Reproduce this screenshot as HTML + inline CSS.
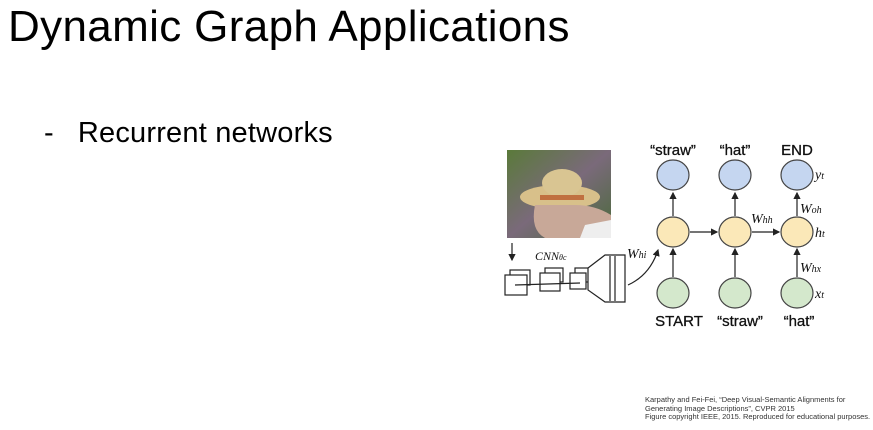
<!DOCTYPE html>
<html><head><style>
body{margin:0;width:873px;height:430px;background:#fff;font-family:"Liberation Sans",sans-serif;overflow:hidden;position:relative}
.t{position:absolute;left:8px;top:2px;font-size:44px;color:#000;white-space:nowrap;letter-spacing:0.35px}
.b{position:absolute;left:44px;top:117px;font-size:29px;color:#000;white-space:nowrap}
.b span{letter-spacing:0.2px}
.c{position:absolute;left:645px;top:396px;font-size:7.5px;line-height:8.5px;color:#333;white-space:nowrap}
</style></head><body>
<div class="t">Dynamic Graph Applications</div>
<div class="b">-&nbsp;&nbsp;&nbsp;<span>Recurrent networks</span></div>
<svg width="873" height="430" style="position:absolute;left:0;top:0">
<defs><marker id="a" markerWidth="6" markerHeight="6" refX="5" refY="3" orient="auto"><path d="M0,0L6,3L0,6z" fill="#222"/></marker>
<linearGradient id="g" x1="0" y1="0" x2="1" y2="1"><stop offset="0" stop-color="#5a7a3a"/><stop offset="0.5" stop-color="#7a6a7a"/><stop offset="1" stop-color="#4a6a3a"/></linearGradient></defs>
<rect x="507" y="150" width="104" height="88" fill="url(#g)"/>
<ellipse cx="560" cy="197" rx="40" ry="12" fill="#d8c08a"/>
<ellipse cx="562" cy="183" rx="20" ry="14" fill="#d9c592"/>
<rect x="540" y="195" width="44" height="5" fill="#c07040"/>
<path d="M535 205 Q530 230 545 238 L611 238 L611 215 Q595 205 575 205z" fill="#c8a898"/>
<path d="M585 225 L611 220 L611 238 L580 238z" fill="#eee"/>
<g stroke="#222" stroke-width="1.2" fill="none">
<line x1="512" y1="243" x2="512" y2="260" marker-end="url(#a)"/>
<rect x="510" y="270" width="20" height="15" fill="#fff"/><rect x="505" y="275" width="22" height="20" fill="#fff"/>
<rect x="545" y="268" width="18" height="14" fill="#fff"/><rect x="540" y="273" width="20" height="18" fill="#fff"/>
<rect x="575" y="268" width="14" height="14" fill="#fff"/><rect x="570" y="273" width="16" height="16" fill="#fff"/>
<path d="M588 268 L605 255 L625 255 L625 302 L605 302 L588 290z" fill="#fff"/>
<line x1="610" y1="256" x2="610" y2="301"/><line x1="615" y1="256" x2="615" y2="301"/>
<line x1="515" y1="285" x2="580" y2="283"/>
<path d="M628 285 Q650 275 658 250" marker-end="url(#a)"/>
<line x1="673" y1="216" x2="673" y2="193" marker-end="url(#a)"/>
<line x1="735" y1="216" x2="735" y2="193" marker-end="url(#a)"/>
<line x1="797" y1="216" x2="797" y2="193" marker-end="url(#a)"/>
<line x1="673" y1="277" x2="673" y2="249" marker-end="url(#a)"/>
<line x1="735" y1="277" x2="735" y2="249" marker-end="url(#a)"/>
<line x1="797" y1="277" x2="797" y2="249" marker-end="url(#a)"/>
<line x1="690" y1="232" x2="717" y2="232" marker-end="url(#a)"/>
<line x1="752" y1="232" x2="779" y2="232" marker-end="url(#a)"/>
</g>
<g stroke="#444" stroke-width="1.2">
<ellipse cx="673" cy="175" rx="16" ry="15" fill="#c5d6f0"/><ellipse cx="735" cy="175" rx="16" ry="15" fill="#c5d6f0"/><ellipse cx="797" cy="175" rx="16" ry="15" fill="#c5d6f0"/>
<ellipse cx="673" cy="232" rx="16" ry="15" fill="#fbe8b8"/><ellipse cx="735" cy="232" rx="16" ry="15" fill="#fbe8b8"/><ellipse cx="797" cy="232" rx="16" ry="15" fill="#fbe8b8"/>
<ellipse cx="673" cy="293" rx="16" ry="15" fill="#d4e8cc"/><ellipse cx="735" cy="293" rx="16" ry="15" fill="#d4e8cc"/><ellipse cx="797" cy="293" rx="16" ry="15" fill="#d4e8cc"/>
</g>
<g font-family="Liberation Sans" font-size="15" fill="#111" text-anchor="middle" stroke="#111" stroke-width="0.3">
<text x="673" y="155">“straw”</text><text x="735" y="155">“hat”</text><text x="797" y="155">END</text>
<text x="679" y="326">START</text><text x="740" y="326">“straw”</text><text x="799" y="326">“hat”</text>
</g>
<g font-family="Liberation Serif" font-style="italic" font-size="14" fill="#111">
<text x="815" y="179">y<tspan font-size="10">t</tspan></text>
<text x="815" y="237">h<tspan font-size="10">t</tspan></text>
<text x="815" y="298">x<tspan font-size="10">t</tspan></text>
<text x="800" y="213">W<tspan font-size="10">oh</tspan></text>
<text x="800" y="272">W<tspan font-size="10">hx</tspan></text>
<text x="751" y="223">W<tspan font-size="10">hh</tspan></text>
<text x="627" y="258">W<tspan font-size="10">hi</tspan></text>
<text x="535" y="260" font-size="12">CNN<tspan font-size="8">θc</tspan></text>
</g>
</svg>
<div class="c">Karpathy and Fei-Fei, “Deep Visual-Semantic Alignments for<br>Generating Image Descriptions”, CVPR 2015<br>Figure copyright IEEE, 2015. Reproduced for educational purposes.</div>
</body></html>
